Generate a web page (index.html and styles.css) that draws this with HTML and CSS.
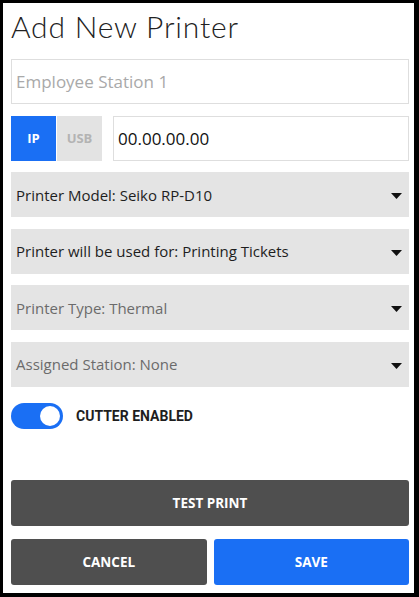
FILE: index.html
```html
<!DOCTYPE html>
<html>
<head>
  <title>Add New Printer</title>
  <meta charset="UTF-8" />
  <link rel="stylesheet" href="styles.css">
</head>
<body>
  <div class="frame">
    <h1 class="title">Add New Printer</h1>

    <div class="printer-form">
      <input type="text" class="field" placeholder="Employee Station 1" />

      <div class="conn-row">
        <div class="segment">
          <span class="seg-btn active">IP</span>
          <span class="seg-btn">USB</span>
        </div>
        <input type="text" class="field ip-field" value="00.00.00.00" />
      </div>

      <div class="dropdown">
        <span>Printer Model: Seiko RP-D10</span>
        <svg class="caret" width="11" height="6" viewBox="0 0 11 6"><path d="M0 0h11L5.5 6z" fill="#111"/></svg>
      </div>
      <div class="dropdown">
        <span>Printer will be used for: Printing Tickets</span>
        <svg class="caret" width="11" height="6" viewBox="0 0 11 6"><path d="M0 0h11L5.5 6z" fill="#111"/></svg>
      </div>
      <div class="dropdown muted">
        <span>Printer Type: Thermal</span>
        <svg class="caret" width="11" height="6" viewBox="0 0 11 6"><path d="M0 0h11L5.5 6z" fill="#111"/></svg>
      </div>
      <div class="dropdown muted">
        <span>Assigned Station: None</span>
        <svg class="caret" width="11" height="6" viewBox="0 0 11 6"><path d="M0 0h11L5.5 6z" fill="#111"/></svg>
      </div>

      <div class="toggle-row">
        <span class="toggle on"><span class="knob"></span></span>
        <span class="toggle-label">CUTTER ENABLED</span>
      </div>
    </div>

    <div class="actions">
      <button class="btn btn-dark btn-full">TEST PRINT</button>
      <div class="btn-row">
        <button class="btn btn-dark">CANCEL</button>
        <button class="btn btn-blue">SAVE</button>
      </div>
    </div>
  </div>
</body>
</html>
```

FILE: styles.css
```css
html, body {
  margin: 0;
  padding: 0;
  height: 100%;
}

body {
  font-family: "Open Sans", "Liberation Sans", sans-serif;
  background-color: #fff;
  color: #222;
}

.frame {
  box-sizing: border-box;
  height: 597px;
  border-style: solid;
  border-color: #000;
  border-width: 3px 5px 4px 3px;
  padding: 5px 5px 8px 8px;
  display: flex;
  flex-direction: column;
}

.title {
  margin: 0 0 15px 0;
  font-family: Lato, "Open Sans", sans-serif;
  font-size: 30px;
  line-height: 36px;
  font-weight: 300;
  letter-spacing: 0.8px;
  color: #222;
}

.printer-form {
  display: flex;
  flex-direction: column;
  gap: 11.5px;
}

.field {
  box-sizing: border-box;
  width: 100%;
  height: 45px;
  margin: 0;
  padding: 0 4px;
  border: 1px solid #dedede;
  border-radius: 0;
  font-family: inherit;
  font-size: 17px;
  color: #111;
  outline: none;
}

.field::placeholder {
  color: #a9a9a9;
}

.conn-row {
  display: flex;
  gap: 11px;
}

.segment {
  display: flex;
  gap: 1px;
  flex: none;
}

.seg-btn {
  width: 45px;
  height: 45px;
  display: flex;
  align-items: center;
  justify-content: center;
  font-size: 13px;
  font-weight: bold;
  background-color: #e3e3e3;
  color: #b3b3b3;
}

.seg-btn.active {
  background-color: #1a6ff4;
  color: #fff;
}

.ip-field {
  flex: 1;
  width: auto;
}

.dropdown {
  height: 45px;
  display: flex;
  align-items: center;
  justify-content: space-between;
  padding: 0 7px 0 5px;
  background-color: #e4e4e4;
  font-size: 15px;
  color: #1e1e1e;
}

.dropdown.muted {
  color: #6b6b6b;
}

.caret {
  display: block;
  margin-top: 3px;
}

.toggle-row {
  display: flex;
  align-items: center;
  gap: 13px;
  margin-top: 5px;
}

.toggle {
  width: 52px;
  height: 26px;
  border-radius: 13px;
  background-color: #ccc;
  display: flex;
  align-items: center;
  padding: 0 3px;
  box-sizing: border-box;
}

.toggle.on {
  background-color: #1a6ff4;
  justify-content: flex-end;
}

.knob {
  width: 20px;
  height: 20px;
  border-radius: 50%;
  background-color: #fff;
}

.toggle-label {
  font-family: Roboto, "Liberation Sans", sans-serif;
  font-size: 14px;
  font-weight: bold;
  color: #1e1e1e;
}

.actions {
  margin-top: auto;
  display: flex;
  flex-direction: column;
  gap: 13px;
}

.btn-row {
  display: flex;
  gap: 7px;
}

.btn {
  height: 46px;
  border: none;
  border-radius: 3px;
  font-family: "Open Sans", "Liberation Sans", sans-serif;
  font-size: 13.5px;
  font-weight: bold;
  color: #fff;
  cursor: pointer;
  flex: 1;
}

.btn-full {
  width: 100%;
  flex: none;
}

.btn-dark {
  background-color: #4f4f4f;
}

.btn-blue {
  background-color: #1a6ff4;
}
```
